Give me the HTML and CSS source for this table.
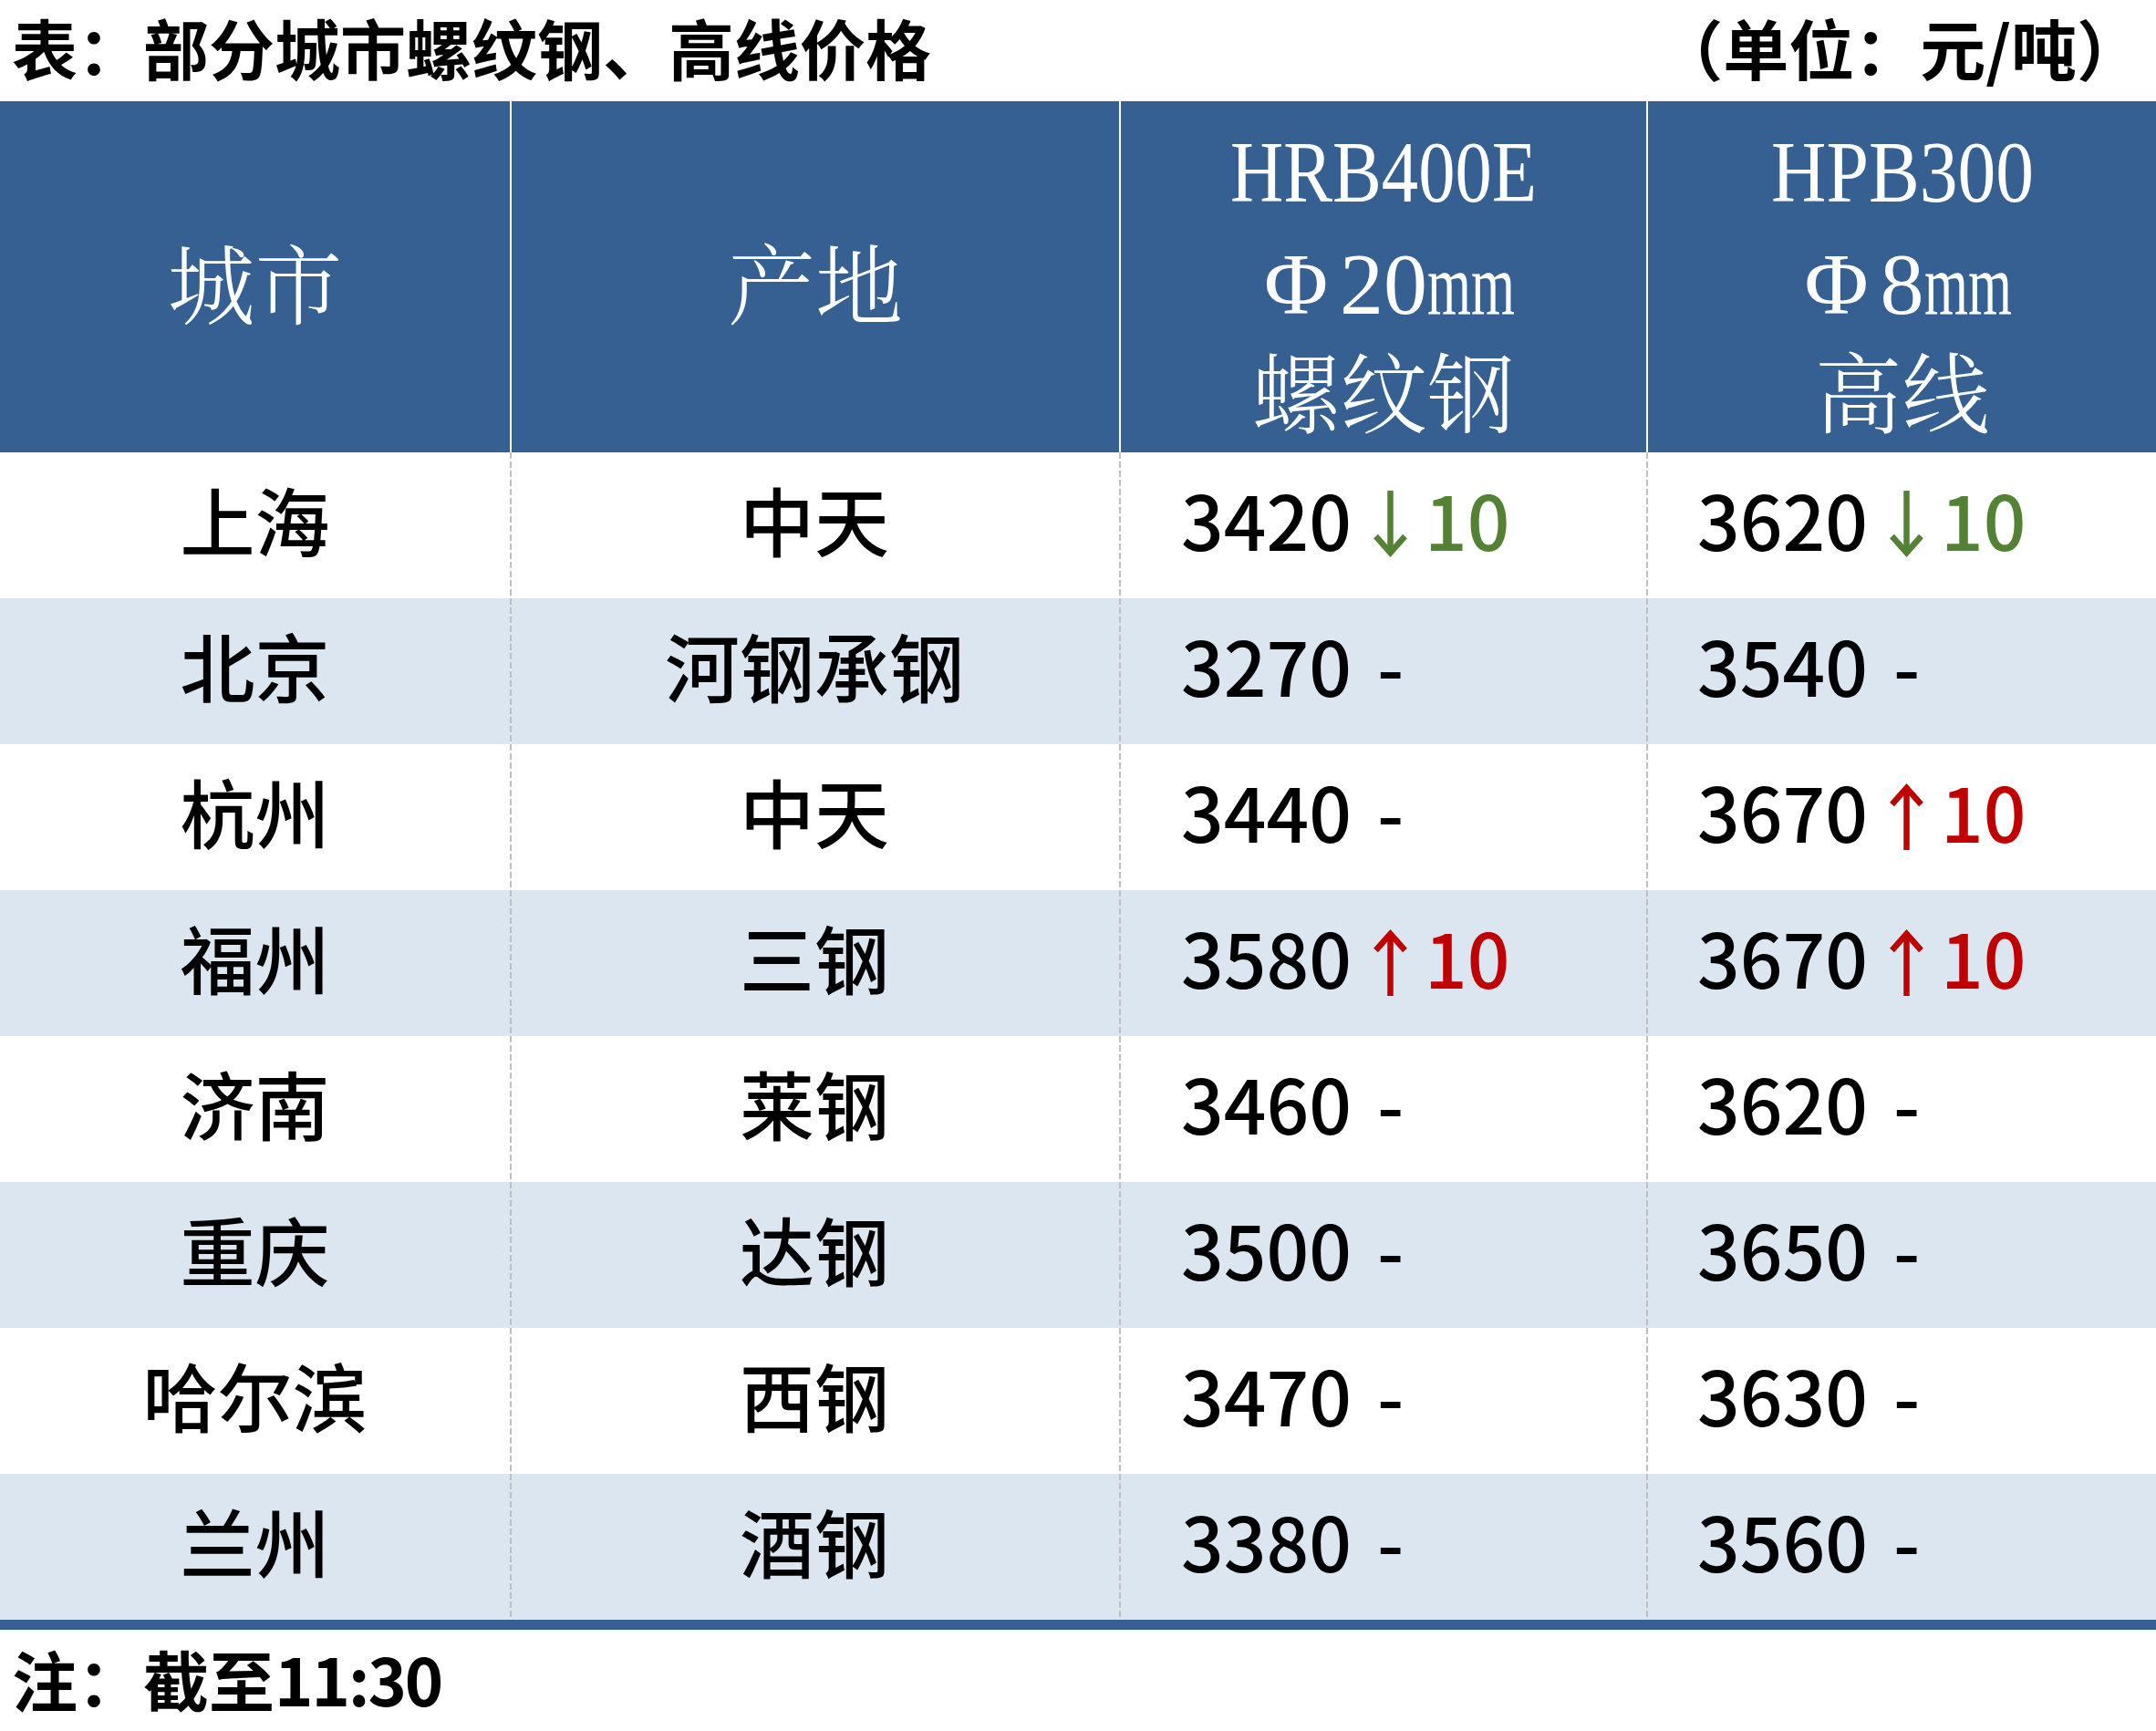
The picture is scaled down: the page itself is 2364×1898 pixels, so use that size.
FILE: index.html
```html
<!DOCTYPE html>
<html lang="zh-CN">
<head>
<meta charset="utf-8">
<title>部分城市螺纹钢、高线价格</title>
<link rel="stylesheet" href="styles.css">
</head>
<body>
<div class="page">
  <div class="title-row">
    <span class="title">表：部分城市螺纹钢、高线价格</span>
    <span class="unit">（单位：元/吨）</span>
  </div>
  <div class="table">
    <div class="thead">
      <div class="hcell hsingle"><div class="hl">城市</div></div>
      <div class="hcell hsingle"><div class="hl">产地</div></div>
      <div class="hcell">
        <div class="hl"><span class="cond c-hrb">HRB400E</span></div>
        <div class="hl"><span class="phi">Φ</span>20<span class="cond c-mm">mm</span></div>
        <div class="hl">螺纹钢</div>
      </div>
      <div class="hcell">
        <div class="hl"><span class="cond c-hpb">HPB300</span></div>
        <div class="hl"><span class="phi">Φ</span>8<span class="cond c-mm">mm</span></div>
        <div class="hl">高线</div>
      </div>
    </div>

    <div class="row">
      <div class="cell c1">上海</div>
      <div class="cell c2">中天</div>
      <div class="cell c3">3420<svg class="arr" viewBox="0 0 37 74" width="37" height="74"><rect class="down-shaft" x="15.25" y="0" width="6.5" height="66"/><polyline class="down" points="2.5,50 18.5,68 34.5,50"/></svg><span class="down-t">10</span></div>
      <div class="cell c4">3620<svg class="arr" viewBox="0 0 37 74" width="37" height="74"><rect class="down-shaft" x="15.25" y="0" width="6.5" height="66"/><polyline class="down" points="2.5,50 18.5,68 34.5,50"/></svg><span class="down-t">10</span></div>
    </div>
    <div class="row alt">
      <div class="cell c1">北京</div>
      <div class="cell c2">河钢承钢</div>
      <div class="cell c3">3270<span class="dash">-</span></div>
      <div class="cell c4">3540<span class="dash">-</span></div>
    </div>
    <div class="row">
      <div class="cell c1">杭州</div>
      <div class="cell c2">中天</div>
      <div class="cell c3">3440<span class="dash">-</span></div>
      <div class="cell c4">3670<svg class="arr" viewBox="0 0 37 74" width="37" height="74"><rect class="up-shaft" x="15.25" y="8" width="6.5" height="66"/><polyline class="up" points="2.5,24 18.5,6 34.5,24"/></svg><span class="up-t">10</span></div>
    </div>
    <div class="row alt">
      <div class="cell c1">福州</div>
      <div class="cell c2">三钢</div>
      <div class="cell c3">3580<svg class="arr" viewBox="0 0 37 74" width="37" height="74"><rect class="up-shaft" x="15.25" y="8" width="6.5" height="66"/><polyline class="up" points="2.5,24 18.5,6 34.5,24"/></svg><span class="up-t">10</span></div>
      <div class="cell c4">3670<svg class="arr" viewBox="0 0 37 74" width="37" height="74"><rect class="up-shaft" x="15.25" y="8" width="6.5" height="66"/><polyline class="up" points="2.5,24 18.5,6 34.5,24"/></svg><span class="up-t">10</span></div>
    </div>
    <div class="row">
      <div class="cell c1">济南</div>
      <div class="cell c2">莱钢</div>
      <div class="cell c3">3460<span class="dash">-</span></div>
      <div class="cell c4">3620<span class="dash">-</span></div>
    </div>
    <div class="row alt">
      <div class="cell c1">重庆</div>
      <div class="cell c2">达钢</div>
      <div class="cell c3">3500<span class="dash">-</span></div>
      <div class="cell c4">3650<span class="dash">-</span></div>
    </div>
    <div class="row">
      <div class="cell c1">哈尔滨</div>
      <div class="cell c2">西钢</div>
      <div class="cell c3">3470<span class="dash">-</span></div>
      <div class="cell c4">3630<span class="dash">-</span></div>
    </div>
    <div class="row alt">
      <div class="cell c1">兰州</div>
      <div class="cell c2">酒钢</div>
      <div class="cell c3">3380<span class="dash">-</span></div>
      <div class="cell c4">3560<span class="dash">-</span></div>
    </div>
  </div>
  <div class="note">注：截至<span class="time">11:30</span></div>
</div>
</body>
</html>
```

FILE: styles.css
```css
* { box-sizing: border-box; }
html, body { margin: 0; padding: 0; background: #ffffff; }
body { width: 2364px; height: 1898px; overflow: hidden; }

.page { width: 2364px; display: flex; flex-direction: column; }

.title-row {
  height: 111px;
  display: flex;
  justify-content: space-between;
  align-items: center;
  padding: 0 15px 10px 13px;
  font-family: "Noto Sans CJK SC", "Liberation Sans", sans-serif;
  font-weight: 700;
  font-size: 72px;
  line-height: 1;
  color: #000;
  white-space: nowrap;
}

.table { display: flex; flex-direction: column; border-bottom: 11px solid #376092; }

.thead {
  display: grid;
  grid-template-columns: 559px 668px 578px 559px;
  height: 385px;
  background: #376092;
  color: #ffffff;
  font-family: "Liberation Serif", "Noto Serif CJK SC", "Noto Sans CJK SC", serif;
  font-weight: 300;
  font-size: 96px;
}
.hcell {
  display: flex;
  flex-direction: column;
  justify-content: flex-start;
  align-items: center;
  padding-top: 16px;
  text-align: center;
  white-space: nowrap;
}
.hcell + .hcell { border-left: 2px solid #ffffff; }
.hsingle { justify-content: center; padding-top: 24px; }
.hl { line-height: 123px; height: 123px; }

.cond { display: inline-block; transform-origin: left center; white-space: nowrap; }
.c-hrb { width: 336px; transform: scaleX(0.84); text-align: left; }
.c-hpb { width: 288px; transform: scaleX(0.871); text-align: left; }
.c-mm { width: 96px; transform: scaleX(0.643); text-align: left; }
.phi { display: inline-block; width: 96px; text-align: center; }

.row {
  display: grid;
  grid-template-columns: 559px 668px 578px 559px;
  height: 160px;
  background: #ffffff;
}
.row.alt { background: #dce6f1; }

.cell {
  display: flex;
  align-items: center;
  padding-bottom: 14px;
  font-family: "Noto Sans CJK SC", "Liberation Sans", sans-serif;
  font-weight: 500;
  font-size: 82px;
  line-height: 1;
  color: #000;
  white-space: nowrap;
}
.cell + .cell {
  background-image: repeating-linear-gradient(to bottom, #bfbfbf 0 7px, transparent 7px 10px);
  background-size: 2px 100%;
  background-repeat: no-repeat;
  background-position: left top;
}
.c1, .c2 { justify-content: center; }
.c3 { padding-left: 68px; }
.c4 { padding-left: 56px; }

.arr { display: inline-block; margin: 0 19px 0 24px; flex: none; position: relative; top: 6px; }
.down-shaft { fill: #548235; }
.down { fill: none; stroke: #548235; stroke-width: 6.5; stroke-linejoin: miter; stroke-miterlimit: 10; }
.up-shaft { fill: #c00000; }
.up { fill: none; stroke: #c00000; stroke-width: 6.5; stroke-linejoin: miter; stroke-miterlimit: 10; }
.down-t { color: #548235; }
.up-t { color: #c00000; }
.dash { margin-left: 28px; }

.note {
  height: 111px;
  display: flex;
  align-items: center;
  padding: 0 0 6px 13px;
  font-family: "Noto Sans CJK SC", "Liberation Sans", sans-serif;
  font-weight: 700;
  font-size: 72px;
  line-height: 1;
  color: #000;
  white-space: nowrap;
}
.time { letter-spacing: -2px; }
```
